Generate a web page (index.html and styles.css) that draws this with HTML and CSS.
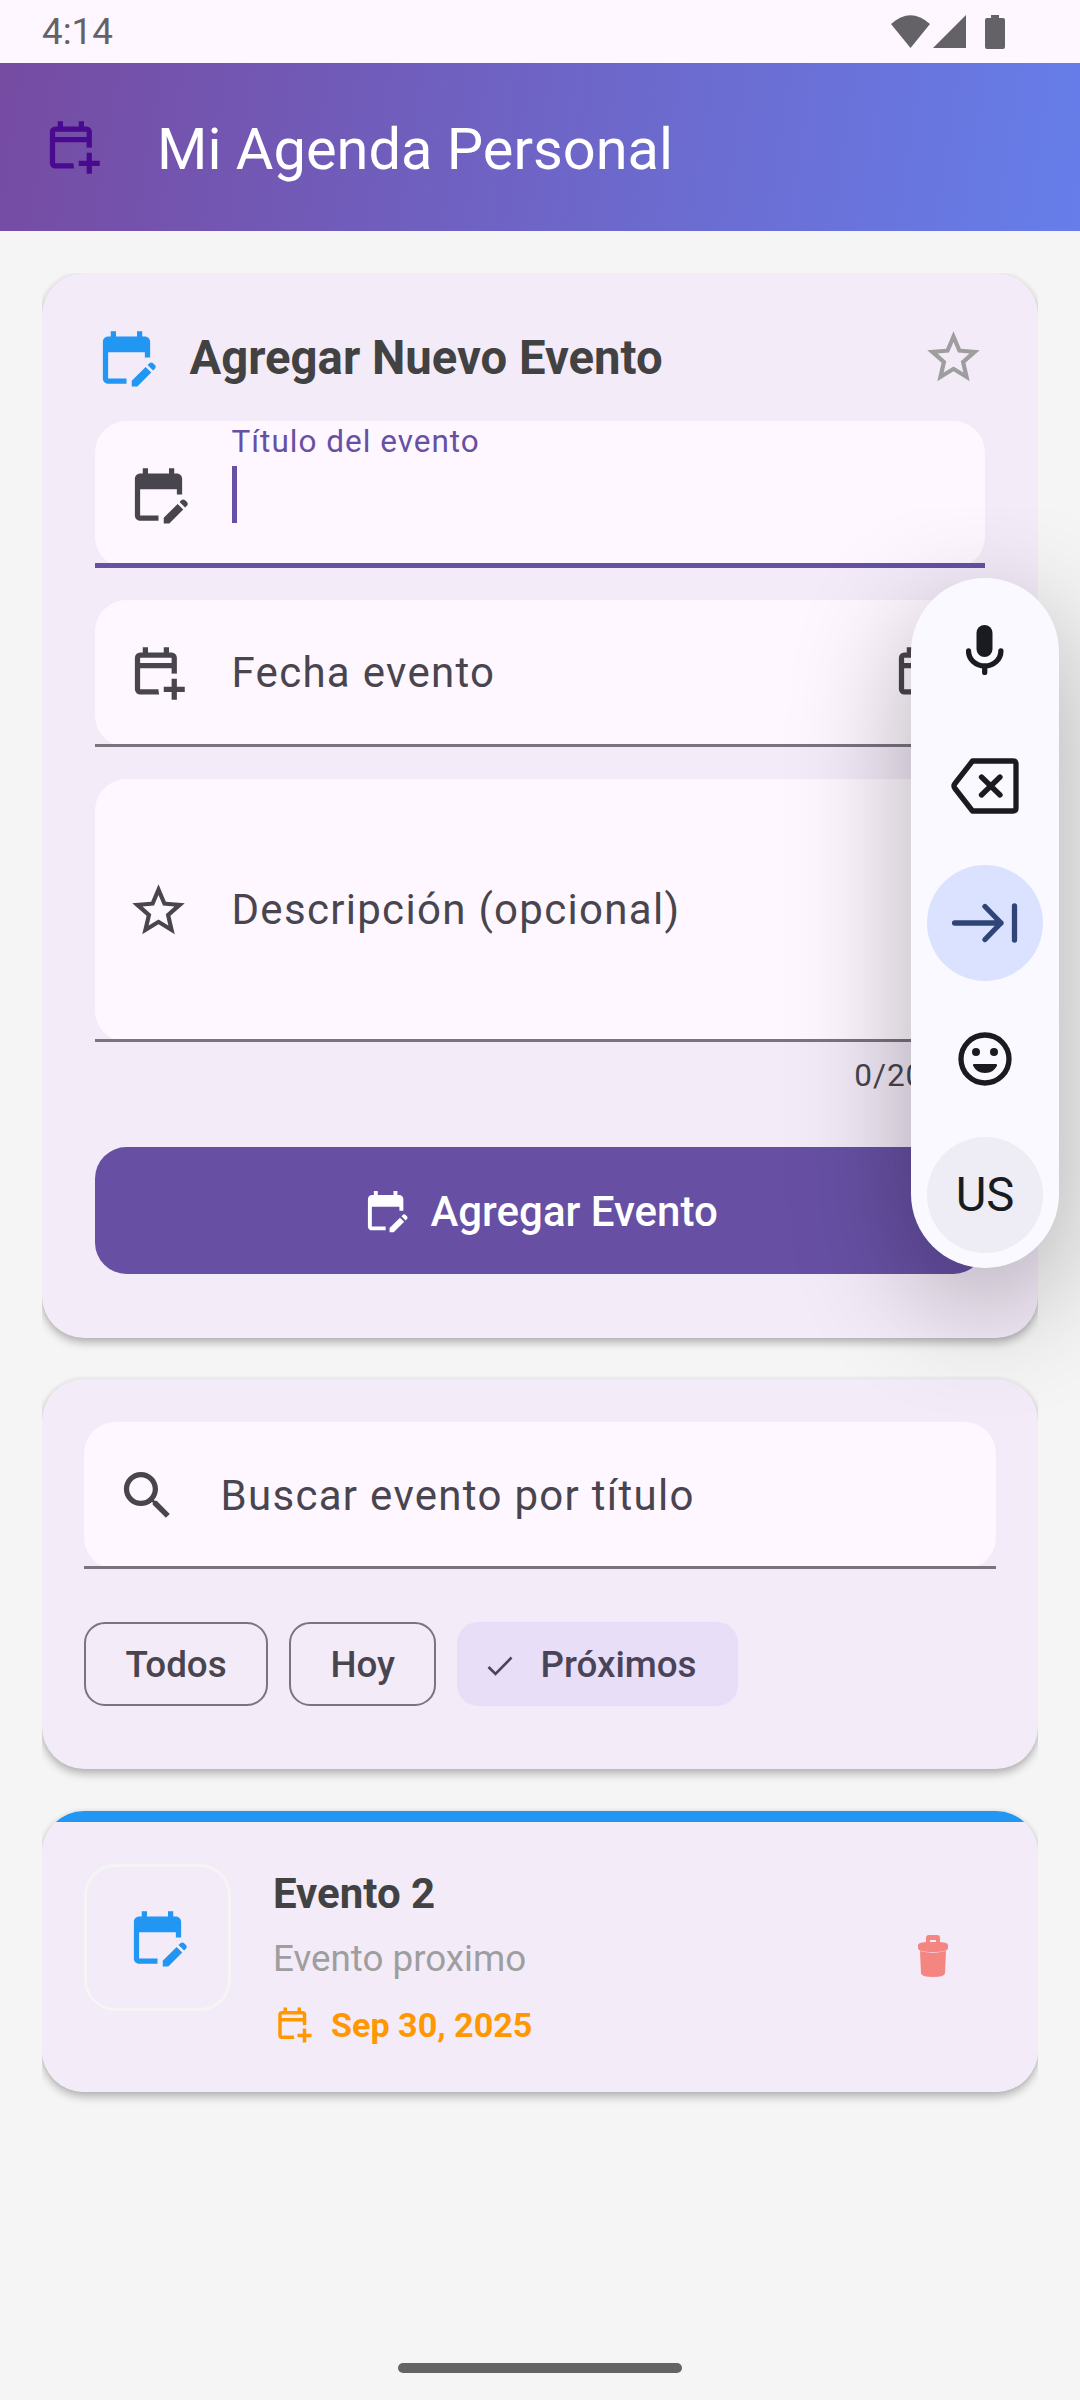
FILE: index.html
```html
<!DOCTYPE html>
<html lang="es">
<head>
<meta charset="utf-8">
<title>Mi Agenda Personal</title>
<link rel="stylesheet" href="styles.css">
</head>
<body>
<svg class="defs" aria-hidden="true">
  <symbol id="edit-calendar" viewBox="0 0 24 24"><path d="M12 22H5c-1.11 0-2-.9-2-2l.01-14c0-1.1.88-2 1.99-2h1V2h2v2h8V2h2v2h1c1.1 0 2 .9 2 2v6h-2v-2H5v10h7v2zm10.13-5.01.71-.71c.39-.39.39-1.02 0-1.41l-.71-.71c-.39-.39-1.02-.39-1.41 0l-.71.71 2.12 2.12zm-.71.71-5.3 5.3H14v-2.12l5.3-5.3 2.12 2.12z"/></symbol>
  <symbol id="add-calendar" viewBox="0 0 24 24"><path fill-rule="evenodd" d="M17 22v-3h-3v-2h3v-3h2v3h3v2h-3v3h-2zM5 20q-.825 0-1.412-.588T3 18V6q0-.825.588-1.412T5 4h1V2h2v2h6V2h2v2h1q.825 0 1.413.588T19 6v6.1q-.5-.075-1-.075t-1 .075V10H5v8h7q0 .5.075 1t.225 1H5zM5 8h12V6H5v2z"/></symbol>
  <symbol id="star" viewBox="0 0 24 24"><path d="M22 9.24l-7.19-.62L12 2 9.19 8.63 2 9.24l5.46 4.73L5.82 21 12 17.27 18.18 21l-1.63-7.03L22 9.24zM12 15.4l-3.76 2.27 1-4.28-3.32-2.88 4.38-.38L12 6.1l1.71 4.04 4.38.38-3.32 2.88 1 4.28L12 15.4z"/></symbol>
</svg>
<div class="screen">
  <div class="status">
    <span class="clock">4:14</span>
    <svg class="status-icons" viewBox="0 0 114 34"><path d="M0 9Q19.500-8.500 39 9L19.500 33z"/><path d="M42 33H75V0z"/><path d="M100 0h8v3h4q2 0 2 2v27q0 2-2 2h-16q-2 0-2-2V5q0-2 2-2h4z"/></svg>
  </div>
  <header class="appbar">
    <svg class="icon"><use href="#add-calendar"/></svg>
    <h1>Mi Agenda Personal</h1>
  </header>
  <main>
    <div class="slot">
    <section class="card form">
      <div class="form-head">
        <svg class="icon blue"><use href="#edit-calendar"/></svg>
        <h2>Agregar Nuevo Evento</h2>
        <svg class="icon grey"><use href="#star"/></svg>
      </div>
      <div class="field focused">
        <svg class="icon"><use href="#edit-calendar"/></svg>
        <div class="input"><label>Título del evento</label><i class="caret"></i></div>
      </div>
      <div class="field">
        <svg class="icon"><use href="#add-calendar"/></svg>
        <span class="hint">Fecha evento</span>
        <svg class="icon"><use href="#add-calendar"/></svg>
      </div>
      <div class="field tall">
        <svg class="icon"><use href="#star"/></svg>
        <span class="hint">Descripción (opcional)</span>
      </div>
      <div class="counter">0/200</div>
      <div class="button"><svg><use href="#edit-calendar"/></svg><span>Agregar Evento</span></div>
    </section>
    </div>
    <div class="slot">
    <section class="card search">
      <div class="field">
        <svg class="icon" viewBox="0 0 24 24"><path d="M15.500 14h-.79l-.28-.27C15.410 12.590 16 11.110 16 9.500 16 5.910 13.090 3 9.500 3S3 5.910 3 9.500 5.910 16 9.500 16c1.610 0 3.090-.59 4.230-1.570l.27.28v.79l5 4.990L20.490 19l-4.990-5zm-6 0C7.010 14 5 11.990 5 9.500S7.010 5 9.500 5 14 7.010 14 9.500 11.990 14 9.500 14z"/></svg>
        <span class="hint">Buscar evento por título</span>
      </div>
      <div class="chips">
        <span class="chip">Todos</span>
        <span class="chip">Hoy</span>
        <span class="chip selected"><svg viewBox="0 0 26 20"><path d="M1.500 11 8.500 18 24.500 1.500"/></svg>Próximos</span>
      </div>
    </section>
    </div>
    <div class="slot">
    <section class="card event">
      <div class="thumb"><svg class="icon blue"><use href="#edit-calendar"/></svg></div>
      <div class="details">
        <h3>Evento 2</h3>
        <p>Evento proximo</p>
        <div class="date"><svg><use href="#add-calendar"/></svg><span>Sep 30, 2025</span></div>
      </div>
      <svg class="trash" viewBox="0 0 30 42"><path fill-rule="evenodd" d="M8 7V3q0-3 3-3h8q3 0 3 3v4q8 .5 8 3v3q0 4-15 4T0 13v-3Q0 7.500 8 7zM12 5v2h6V5z"/><path d="M2 16q13 3.500 26 0l-1 22q0 4-12 4T3 38z"/></svg>
    </section>
    </div>
  </main>
  <div class="navbar"></div>
  <aside class="ime">
    <div class="key"><svg width="38" height="50" viewBox="0 0 38 50"><rect x="10.500" width="16" height="32" rx="8"/><path class="line" d="M2.500 26a16.200 15 0 0 0 32.400 0M18.700 41v6.500"/></svg></div>
    <div class="key"><svg width="68" height="56" viewBox="0 0 68 56"><path class="line" d="M21.500 3H62q3 0 3 3v44q0 3-3 3H21.500L4 30.500q-2-2.500 0-5zM30.500 19 49 37M49 19 30.500 37"/></svg></div>
    <div class="key tab"><svg width="66" height="40" viewBox="0 0 66 40"><path class="line" d="M2.500 20H49M33 3.500 49 20 33 36.500M62.500 3v34"/></svg></div>
    <div class="key"><svg width="54" height="54" viewBox="0 0 54 54"><circle class="line" cx="27" cy="27" r="24"/><circle cx="18" cy="20" r="4"/><circle cx="36" cy="20" r="4"/><path d="M16 32h22q1.500 0 1 1.500C37 38 33 41 27 41s-10-3-12-7.500q-.5-1.500 1-1.500z"/></svg></div>
    <div class="key lang">US</div>
  </aside>
</div>
</body>
</html>
```
FILE: styles.css
```css
* { box-sizing: border-box; margin: 0; padding: 0; }
body { background: #f5f5f5; font-family: Roboto, sans-serif; color: #49454f; }
.defs { position: absolute; width: 0; height: 0; }
svg { display: block; fill: currentColor; flex: none; }
.screen { position: relative; width: 1080px; height: 2400px; overflow: hidden; display: flex; flex-direction: column; background: #f5f5f5; }

.status { height: 63px; padding: 0 75px 0 42px; background: #fef7ff; color: #656267; display: flex; align-items: center; justify-content: space-between; font-size: 36.75px; }
.status-icons { width: 114px; height: 34px; }
.clock { line-height: 43px; }

.appbar { height: 168px; padding: 0 42px; display: flex; align-items: center; gap: 52px; background: linear-gradient(98.84deg, #764ba2, #667eea); color: #4a0a8f; }
.appbar h1 { font-size: 57.75px; font-weight: 400; color: #fff; line-height: 68px; padding-top: 4px; }

.icon { width: 63px; height: 63px; }
.blue { color: #2196f3; }
.grey { color: #9e9e9e; }

main { flex: 1; padding: 42px 42px 0; display: flex; flex-direction: column; }
/* each slot clips its card's shadow at the sides */
.slot { clip-path: inset(-3px 0 -20px 0); margin-bottom: 42px; }
.slot:first-child { clip-path: inset(0 0 -20px 0); margin-bottom: 41px; }
.card { background: #f3ebf8; border-radius: 42px; box-shadow: 0 5px 9px rgba(0,0,0,.25), 0 0 5px rgba(0,0,0,.08); }

.form { height: 1065px; padding: 52.5px 53px; display: flex; flex-direction: column; }
.form-head { display: flex; align-items: center; height: 63px; margin-bottom: 32px; }
.form-head h2 { flex: 1; margin-left: 31.5px; font-size: 47.25px; font-weight: 700; line-height: 56px; color: #424242; padding-top: 2px; }
.field { position: relative; height: 147px; margin-bottom: 32px; padding: 0 31.5px; display: flex; align-items: center; background: #fef7ff; border-radius: 31.5px; flex: none; }
.field::after { content: ""; position: absolute; left: 0; right: 0; bottom: 0; height: 3px; background: #79747e; }
.focused::after { height: 5px; background: #6750a4; }
.tall { height: 263px; margin-bottom: 0; }
.hint { flex: 1; margin-left: 42px; font-size: 42px; letter-spacing: 1.300px; line-height: 50px; }
.input { margin-left: 42px; height: 147px; padding-top: 2px; display: flex; flex-direction: column; color: #6750a4; }
.input label { font-size: 31.5px; letter-spacing: 1px; line-height: 37px; }
.caret { width: 5px; height: 57px; margin-top: 6px; background: #6750a4; }
.counter { height: 37px; margin: 15.500px 42px 53px 0; text-align: right; font-size: 31.5px; letter-spacing: 1px; line-height: 37px; }
.button { height: 127px; border-radius: 31.5px; background: #6750a4; color: #fff; display: flex; align-items: center; justify-content: center; gap: 21px; font-size: 42px; font-weight: 500; }
.button svg { width: 47.25px; height: 47.25px; }
.button span { padding-top: 2px; }

.search { height: 390px; padding: 43px 42px; }
.search .field { margin-bottom: 53px; }
.chips { display: flex; gap: 21px; }
.chip { height: 84px; padding: 0 39.400px; border: 2.600px solid #79747e; border-radius: 21px; display: flex; align-items: center; font-size: 36.75px; font-weight: 500; }
.selected { background: #e8def8; border-color: #e8def8; color: #4a4458; padding-left: 28px; }
.selected svg { width: 26px; height: 20px; margin-right: 27px; margin-top: 3px; fill: none; stroke: currentColor; stroke-width: 2.600; }

.event { height: 281px; padding: 53px 42px 0; display: flex; background: linear-gradient(#2196f3 11px, #f3ebf8 11px); }
.thumb { width: 147px; height: 147px; border: 3px solid #f5f5f5; border-radius: 31.5px; display: flex; align-items: center; justify-content: center; }
.details { flex: 1; margin-left: 42px; }
h3 { font-size: 42px; font-weight: 700; color: #424242; line-height: 50px; margin-top: 5px; }
.details p { font-size: 36.75px; color: #9e9e9e; line-height: 43px; margin-top: 18px; }
.date { display: flex; align-items: center; gap: 16px; margin-top: 24px; color: #ff9800; font-size: 34.125px; font-weight: 700; line-height: 42px; }
.date svg { width: 42px; height: 42px; }
.trash { width: 30px; height: 42px; margin: 71px 48px 0 0; color: #f48581; }

.navbar { width: 284px; height: 10px; margin: 0 auto 27px; border-radius: 5px; background: #646464; }

.ime { position: absolute; left: 911px; top: 578px; width: 148px; height: 690px; padding: 14px 16px 15px; border-radius: 74px; background: #f9f9ff; box-shadow: 0 35px 120px rgba(0,0,0,.3); color: #1a1b20; display: flex; flex-direction: column; justify-content: space-between; }
.key { width: 116px; height: 116px; border-radius: 50%; display: flex; align-items: center; justify-content: center; }
.line { fill: none; stroke: currentColor; stroke-width: 5.300; stroke-linecap: round; stroke-linejoin: round; }
.tab { background: #dae2ff; color: #2f4578; }
.lang { background: #eeecf4; font-size: 47.250px; }
```
